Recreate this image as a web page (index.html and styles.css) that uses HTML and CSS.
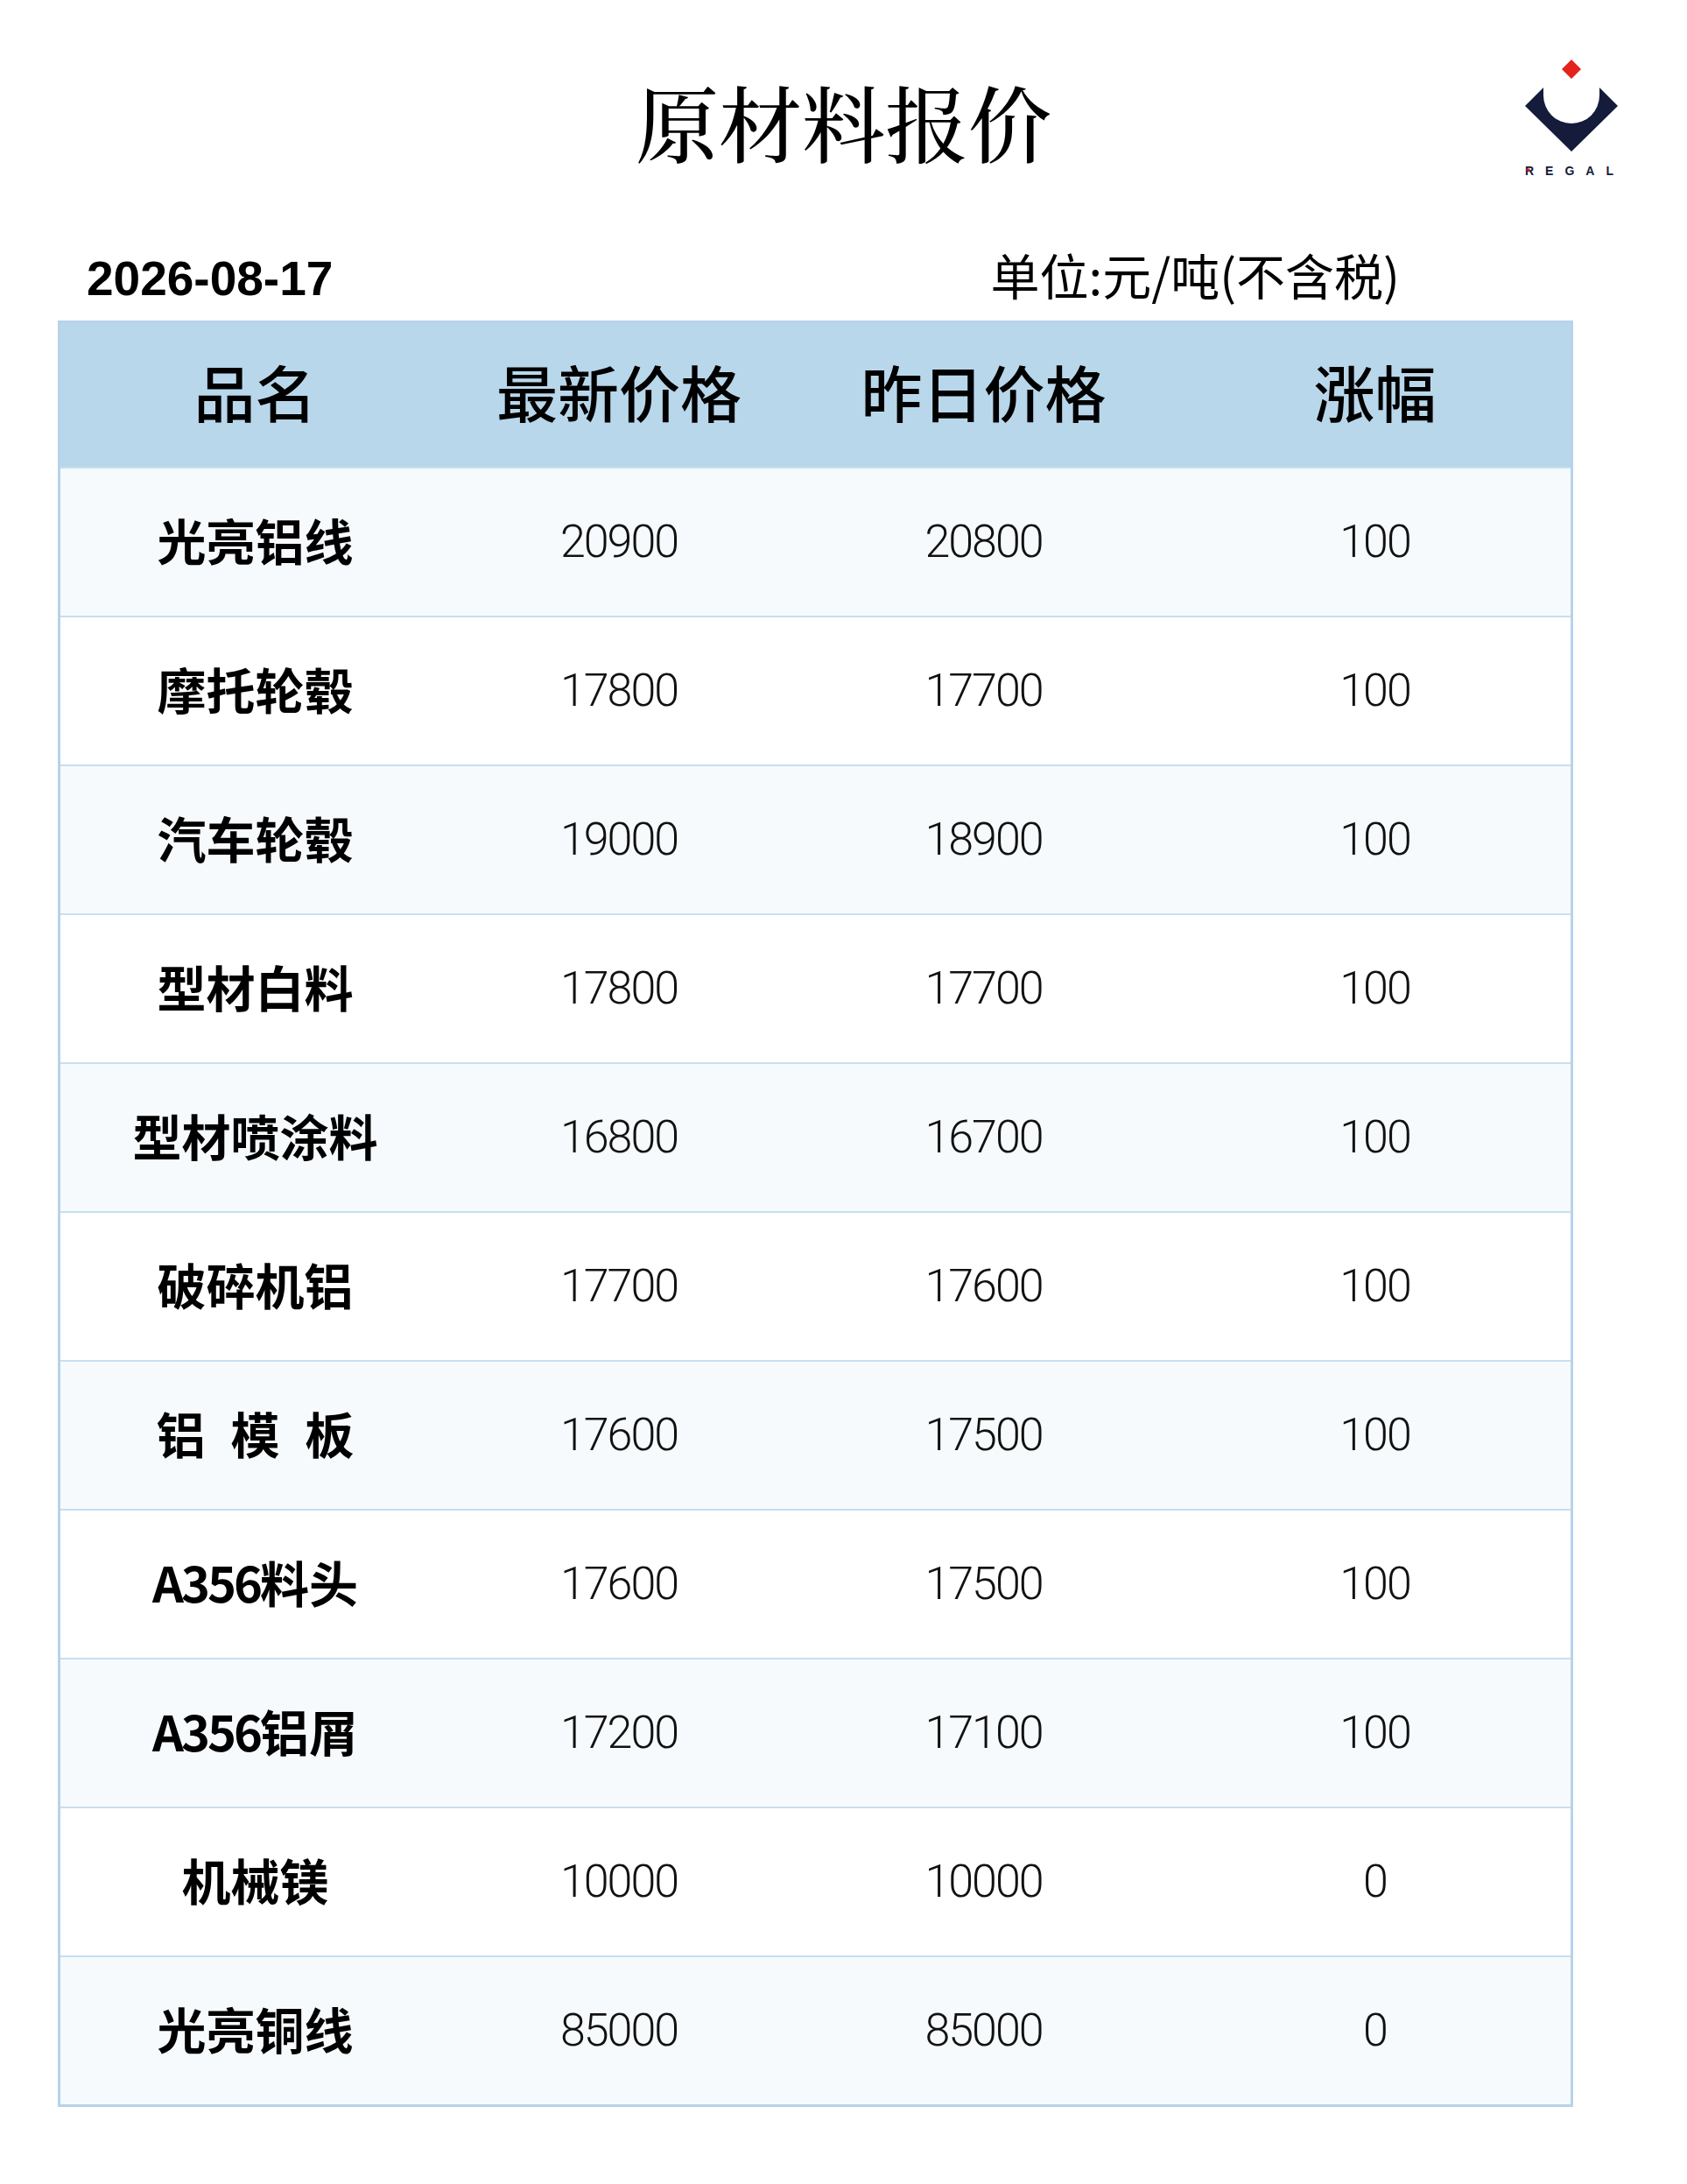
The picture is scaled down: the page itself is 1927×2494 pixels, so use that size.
FILE: index.html
```html
<!DOCTYPE html>
<html lang="zh-CN">
<head>
<meta charset="utf-8">
<title>原材料报价</title>
<link rel="stylesheet" href="styles.css">
</head>
<body>
<div class="page">
  <header class="top">
    <h1 class="title">原材料报价</h1>
    <svg class="logo" viewBox="0 0 116 136" width="116" height="136" aria-label="REGAL">
      <polygon class="logo-red" points="55,2 66,13 55,24 44,13"/>
      <path class="logo-navy" d="M2 55 L23 34 L23 43 A32 32 0 0 0 87 43 L87 34 L108 55 L55 107 Z"/>
      <text class="logo-text" x="2" y="134">REGAL</text>
      <circle class="logo-red" cx="6" cy="128" r="1.8"/>
    </svg>
  </header>

  <div class="info">
    <div class="date">2026-08-17</div>
    <div class="unit">单位:元/吨(不含税)</div>
  </div>

  <div class="table">
    <div class="row head">
      <div class="cell">品名</div>
      <div class="cell">最新价格</div>
      <div class="cell">昨日价格</div>
      <div class="cell">涨幅</div>
    </div>
    <div class="row odd">
      <div class="cell name">光亮铝线</div><div class="cell num">20900</div><div class="cell num">20800</div><div class="cell num">100</div>
    </div>
    <div class="row">
      <div class="cell name">摩托轮毂</div><div class="cell num">17800</div><div class="cell num">17700</div><div class="cell num">100</div>
    </div>
    <div class="row odd">
      <div class="cell name">汽车轮毂</div><div class="cell num">19000</div><div class="cell num">18900</div><div class="cell num">100</div>
    </div>
    <div class="row">
      <div class="cell name">型材白料</div><div class="cell num">17800</div><div class="cell num">17700</div><div class="cell num">100</div>
    </div>
    <div class="row odd">
      <div class="cell name">型材喷涂料</div><div class="cell num">16800</div><div class="cell num">16700</div><div class="cell num">100</div>
    </div>
    <div class="row">
      <div class="cell name">破碎机铝</div><div class="cell num">17700</div><div class="cell num">17600</div><div class="cell num">100</div>
    </div>
    <div class="row odd">
      <div class="cell name spaced">铝 模 板</div><div class="cell num">17600</div><div class="cell num">17500</div><div class="cell num">100</div>
    </div>
    <div class="row">
      <div class="cell name"><span class="latin">A356</span>料头</div><div class="cell num">17600</div><div class="cell num">17500</div><div class="cell num">100</div>
    </div>
    <div class="row odd">
      <div class="cell name"><span class="latin">A356</span>铝屑</div><div class="cell num">17200</div><div class="cell num">17100</div><div class="cell num">100</div>
    </div>
    <div class="row">
      <div class="cell name">机械镁</div><div class="cell num">10000</div><div class="cell num">10000</div><div class="cell num">0</div>
    </div>
    <div class="row odd">
      <div class="cell name">光亮铜线</div><div class="cell num">85000</div><div class="cell num">85000</div><div class="cell num">0</div>
    </div>
  </div>
</div>
</body>
</html>
```

FILE: styles.css
```css
html, body {
  margin: 0;
  padding: 0;
  background: #ffffff;
}

.page {
  width: 1927px;
  min-height: 2494px;
  background: #ffffff;
  color: #000000;
  font-family: "Noto Sans CJK SC", "Noto Sans", sans-serif;
}

.top {
  display: grid;
  grid-template-columns: 1fr auto 1fr;
  padding-top: 66px;
  height: 134px;
}

.title {
  grid-column: 2;
  margin: 25px 0 0 0;
  font-family: "Noto Serif CJK SC", "Noto Sans CJK SC", serif;
  font-weight: 500;
  font-size: 95px;
  line-height: 95px;
  align-self: start;
}

.logo {
  grid-column: 3;
  justify-self: end;
  align-self: start;
  margin-right: 71px;
  display: block;
  overflow: visible;
}

.logo-red { fill: #e3231c; }
.logo-navy { fill: #141b3b; }
.logo-text {
  fill: #141b3b;
  font-family: "Liberation Sans", Arial, sans-serif;
  font-weight: 700;
  font-size: 14px;
  letter-spacing: 13px;
}

.info {
  display: flex;
  align-items: baseline;
  height: 66px;
  margin-top: 83px;
  padding-left: 99px;
}

.date {
  font-family: "Liberation Sans", Arial, sans-serif;
  font-weight: 700;
  font-size: 55px;
  line-height: 60px;
}

.unit {
  margin-left: auto;
  margin-right: 328px;
  font-family: "Noto Sans CJK SC", sans-serif;
  font-weight: 400;
  font-size: 56px;
  line-height: 60px;
}

.table {
  margin-left: 66px;
  margin-top: 17px;
  width: 1725px;
  border: 3px solid #b6d3ea;
}

.row {
  display: grid;
  grid-template-columns: 445px 386px 447px 447px;
  height: 168px;
  border-top: 2px solid #c7dff0;
  align-items: center;
  background: #ffffff;
}

.row.odd {
  background: #f6fafc;
}

.row.head {
  height: 164px;
  border-top: none;
  background: #b9d7eb;
}

.cell {
  text-align: center;
  white-space: nowrap;
}

.head .cell {
  font-family: "Noto Sans CJK SC", sans-serif;
  font-weight: 500;
  font-size: 70px;
  line-height: 80px;
  padding-bottom: 8px;
}

.name {
  font-family: "Noto Sans CJK SC", sans-serif;
  font-weight: 700;
  font-size: 56px;
  line-height: 70px;
  padding-bottom: 6px;
}

.spaced {
  word-spacing: 16px;
}

.latin {
  letter-spacing: -3px;
}

.num {
  font-family: Roboto, "Noto Sans", sans-serif;
  font-weight: 300;
  font-size: 52px;
  line-height: 70px;
  letter-spacing: -2px;
  color: #111111;
}
```
